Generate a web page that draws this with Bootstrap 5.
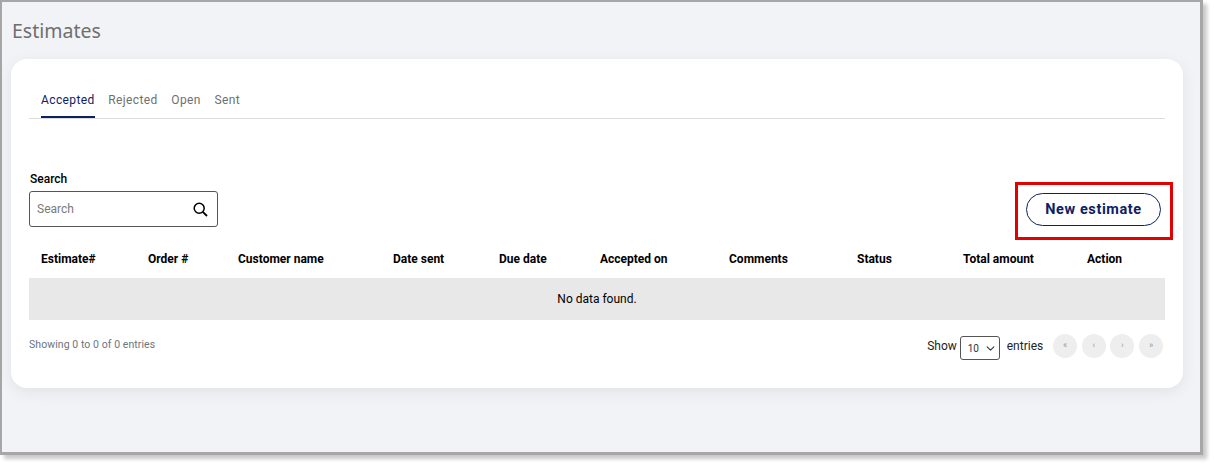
<!DOCTYPE html>
<html lang="en">
<head>
  <meta charset="UTF-8" />
  <meta name="viewport" content="width=device-width, initial-scale=1.0"/>
  <title>Estimates</title>
  <link href="https://cdn.jsdelivr.net/npm/bootstrap@5.3.3/dist/css/bootstrap.min.css" rel="stylesheet"/>
  <style>
    body {
      background: #fff;
      font-family: Roboto, sans-serif;
      min-height: 466px;
      padding-bottom: 11px;
    }
    .page-frame {
      width: 1203px;
      height: 455px;
      background: #f2f3f7;
      border: 2px solid #a6a6a6;
      border-right-width: 3px;
      border-bottom-width: 3px;
      box-shadow: 4px 4px 4px rgba(0,0,0,.22);
      padding: 0 17px 0 9px;
    }
    .page-title {
      font-family: "Noto Sans", sans-serif;
      font-size: 19.5px;
      font-weight: 400;
      line-height: 27px;
      color: #6f6f6f;
      margin: 15px 0 15px 1px;
    }
    .main-panel {
      height: 329px;
      background: #fff;
      border-radius: 16px;
      box-shadow: 0 4px 16px rgba(0,0,0,.07);
      padding: 24px 18px 0;
    }
    .tab-row {
      border-bottom: 1px solid #dcdcdc;
      padding-left: 12px;
      gap: 13.5px;
      height: 36px;
      margin-bottom: 53px;
    }
    .tab-row .nav-link {
      padding: 9px 0 0;
      height: 35px;
      font-size: 12px;
      letter-spacing: .4px;
      line-height: 16px;
      color: #6f6f6f;
    }
    .tab-row .nav-link.active {
      color: #0b2265;
      border-bottom: 2px solid #0b2265;
    }
    .search-label {
      font-size: 12px;
      font-weight: 500;
      line-height: 14px;
      margin: 0 0 5px 1px;
      color: #000;
      display: block;
    }
    .search-box {
      width: 189px;
      height: 36px;
      border: 1px solid #555;
      border-radius: 3px;
      padding: 0 9px 0 7px;
      margin-bottom: 13px;
    }
    .search-box input {
      border: 0;
      outline: 0;
      width: 140px;
      font-size: 12px;
      color: #333;
      padding: 0;
    }
    .search-box input::placeholder { color: #7a7a7a; }
    .red-mark {
      border: 3px solid #e30000;
      padding: 8px 8px 0;
      margin-right: -8px;
      height: 58px;
      width: 158px;
    }
    .btn-new {
      display: block;
      width: 135px;
      height: 33px;
      padding: 0;
      border: 1px solid #0b2265;
      border-radius: 17px;
      color: #0b2265;
      background: #fff;
      font-size: 14.5px;
      font-weight: 700;
      letter-spacing: .6px;
    }
    .estimate-table {
      table-layout: fixed;
      width: 1136px;
      margin: 0;
      font-size: 12px;
    }
    .estimate-table th {
      height: 38px;
      padding: 0 12px;
      vertical-align: middle;
      border: 0;
      font-weight: 700;
      color: #000;
      white-space: nowrap;
    }
    .estimate-table td {
      height: 42px;
      padding: 0;
      vertical-align: middle;
      text-align: center;
      background: #e8e8e8;
      border: 0;
      color: #000;
    }
    .foot-row { margin-top: 14px; height: 24px; padding-right: 2px; }
    .entry-info { font-size: 10.5px; letter-spacing: .07px; color: #6c757d; margin-bottom: 2px; }
    .length-box { font-size: 12px; color: #222; margin-right: 2px; }
    .length-select {
      width: 40px;
      height: 24px;
      padding: 0 0 0 7px;
      margin: 4px 7px 0 3px;
      font-size: 10px;
      border: 1px solid #555;
      border-radius: 3px;
      background-position: right 3px center;
      background-size: 11px 9px;
      background-color: #fff;
      color: #333;
    }
    .page-dots { gap: 4.6px; }
    .page-dots span {
      width: 24px;
      height: 24px;
      border-radius: 50%;
      background: #eee;
      color: #999;
      font-size: 9px;
    }
  </style>
</head>
<body>
  <div class="page-frame">
    <h1 class="page-title">Estimates</h1>
    <div class="main-panel">
      <ul class="nav tab-row">
        <li class="nav-item"><a class="nav-link active" href="#">Accepted</a></li>
        <li class="nav-item"><a class="nav-link" href="#">Rejected</a></li>
        <li class="nav-item"><a class="nav-link" href="#">Open</a></li>
        <li class="nav-item"><a class="nav-link" href="#">Sent</a></li>
      </ul>

      <div class="d-flex justify-content-between align-items-end">
        <div>
          <label class="search-label" for="search">Search</label>
          <div class="search-box d-flex align-items-center justify-content-between">
            <input type="text" id="search" placeholder="Search" />
            <svg width="15" height="15" viewBox="0 0 15 15" fill="none" stroke="#000" stroke-width="1.5">
              <circle cx="6.2" cy="6.2" r="5"/>
              <path d="M9.8 9.8 14 14" stroke-width="1.8"/>
            </svg>
          </div>
        </div>
        <div class="red-mark">
          <button type="button" class="btn btn-new">New estimate</button>
        </div>
      </div>

      <table class="table estimate-table">
        <colgroup>
          <col width="107"><col width="90"><col width="155"><col width="106"><col width="101">
          <col width="129"><col width="128"><col width="106"><col width="124"><col width="90">
        </colgroup>
        <thead>
          <tr>
            <th>Estimate#</th>
            <th>Order #</th>
            <th>Customer name</th>
            <th>Date sent</th>
            <th>Due date</th>
            <th>Accepted on</th>
            <th>Comments</th>
            <th>Status</th>
            <th>Total amount</th>
            <th>Action</th>
          </tr>
        </thead>
        <tbody>
          <tr><td colspan="10">No data found.</td></tr>
        </tbody>
      </table>

      <div class="foot-row d-flex justify-content-between align-items-center">
        <div class="entry-info">Showing 0 to 0 of 0 entries</div>
        <div class="d-flex align-items-center">
          <div class="length-box d-flex align-items-center">
            Show
            <select class="form-select length-select"><option>10</option><option>25</option></select>
            entries
          </div>
          <div class="page-dots d-flex ms-2">
            <span class="d-flex align-items-center justify-content-center">«</span>
            <span class="d-flex align-items-center justify-content-center">‹</span>
            <span class="d-flex align-items-center justify-content-center">›</span>
            <span class="d-flex align-items-center justify-content-center">»</span>
          </div>
        </div>
      </div>
    </div>
  </div>
  <script src="https://cdn.jsdelivr.net/npm/bootstrap@5.3.3/dist/js/bootstrap.bundle.min.js"></script>
</body>
</html>
